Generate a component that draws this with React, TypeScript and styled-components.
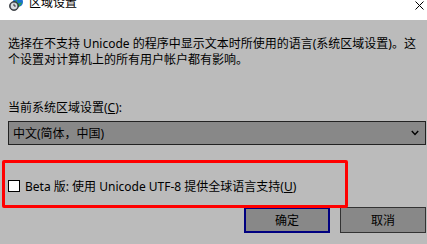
import styled, { createGlobalStyle } from "styled-components";

const GlobalStyle = createGlobalStyle`
  html, body {
    margin: 0;
    padding: 0;
    background: #bbbbbb;
  }
  body {
    font-family: "Noto Sans", "Noto Sans CJK SC", sans-serif;
    font-size: 12px;
    color: #000;
  }
`;

const Window = styled.div`
  position: relative;
  width: 427px;
  height: 244px;
  overflow: hidden;
  background: #bbbbbb;
`;

const TitleBar = styled.div`
  height: 20px;
  background: #ffffff;
  display: flex;
  align-items: flex-start;
  padding-left: 9px;
  padding-right: 2px;
`;

const AppIcon = styled.svg`
  width: 14px;
  height: 14px;
  margin-top: -3px;
  flex-shrink: 0;
`;

const Title = styled.div`
  margin-left: 6px;
  margin-top: -5px;
  font-size: 12px;
  line-height: 16px;
  flex: 1;
`;

const CloseIcon = styled.svg`
  width: 9px;
  height: 9px;
  margin-top: 1px;
  margin-right: 1px;
`;

const Content = styled.div`
  padding: 16px 1px 0 8px;
`;

const Paragraph = styled.p`
  margin: 0;
  font-size: 12px;
  line-height: 16px;
  white-space: nowrap;
`;

const FieldLabel = styled.div`
  margin-top: 32px;
  font-size: 12px;
  line-height: 16px;
`;

const Key = styled.span`
  text-decoration: underline;
`;

const SelectBox = styled.div`
  margin-top: 5px;
  height: 24px;
  box-sizing: border-box;
  border: 1px solid #222222;
  background: #888888;
  display: flex;
  align-items: center;
  padding: 0 6px 0 4px;
  font-size: 12px;
`;

const SelectText = styled.span`
  flex: 1;
`;

const Chevron = styled.svg`
  width: 8px;
  height: 6px;
`;

const CheckRow = styled.label`
  margin-top: 35px;
  display: flex;
  align-items: center;
  height: 12px;
  font-size: 12px;
`;

const Box = styled.span`
  width: 12px;
  height: 12px;
  box-sizing: border-box;
  border: 1px solid #000;
  background: #ffffff;
  margin-right: 5px;
`;

const Buttons = styled.div`
  margin-top: 15px;
  display: flex;
  justify-content: flex-end;
  gap: 10px;
`;

const Button = styled.div<{ $primary?: boolean }>`
  width: 86px;
  height: 26px;
  box-sizing: border-box;
  border: ${(p) => (p.$primary ? "2px solid #000080" : "1px solid #333333")};
  background: #888888;
  display: flex;
  align-items: center;
  justify-content: center;
  font-size: 12px;
`;

const Highlight = styled.div`
  position: absolute;
  left: 2px;
  top: 160px;
  width: 346px;
  height: 48px;
  box-sizing: border-box;
  border: 3px solid #ff0000;
  border-radius: 2px;
  pointer-events: none;
`;

const App = () => {
  return (
    <>
      <GlobalStyle />
      <Window>
        <TitleBar>
          <AppIcon viewBox="0 0 14 14">
            <circle cx="9" cy="5" r="5" fill="#1a6fd0" />
            <path d="M6 2 Q9 3 8 6 Q11 7 13 5 Q12 9 9 10 Z" fill="#2fa34a" />
            <circle cx="5" cy="9" r="4.5" fill="#5a5f66" stroke="#2b2f33" strokeWidth="0.8" />
            <circle cx="5" cy="9" r="3.2" fill="#d8dde2" />
            <path d="M5 6.8 V9 H6.8" stroke="#222" strokeWidth="0.9" fill="none" />
          </AppIcon>
          <Title>区域设置</Title>
          <CloseIcon viewBox="0 0 9 9">
            <path d="M0.5 0.5 L8.5 8.5 M8.5 0.5 L0.5 8.5" stroke="#000" strokeWidth="1" />
          </CloseIcon>
        </TitleBar>
        <Content>
          <Paragraph>
            选择在不支持 Unicode 的程序中显示文本时所使用的语言(系统区域设置)。这
            <br />
            个设置对计算机上的所有用户帐户都有影响。
          </Paragraph>
          <FieldLabel>
            当前系统区域设置(<Key>C</Key>):
          </FieldLabel>
          <SelectBox>
            <SelectText>中文(简体，中国)</SelectText>
            <Chevron viewBox="0 0 8 6">
              <path d="M0.8 1 L4 4.5 L7.2 1" stroke="#000" strokeWidth="1.4" fill="none" />
            </Chevron>
          </SelectBox>
          <CheckRow>
            <Box />
            Beta 版: 使用 Unicode UTF-8 提供全球语言支持(<Key>U</Key>)
          </CheckRow>
          <Buttons>
            <Button $primary>确定</Button>
            <Button>取消</Button>
          </Buttons>
        </Content>
        <Highlight />
      </Window>
    </>
  );
};

export default App;
